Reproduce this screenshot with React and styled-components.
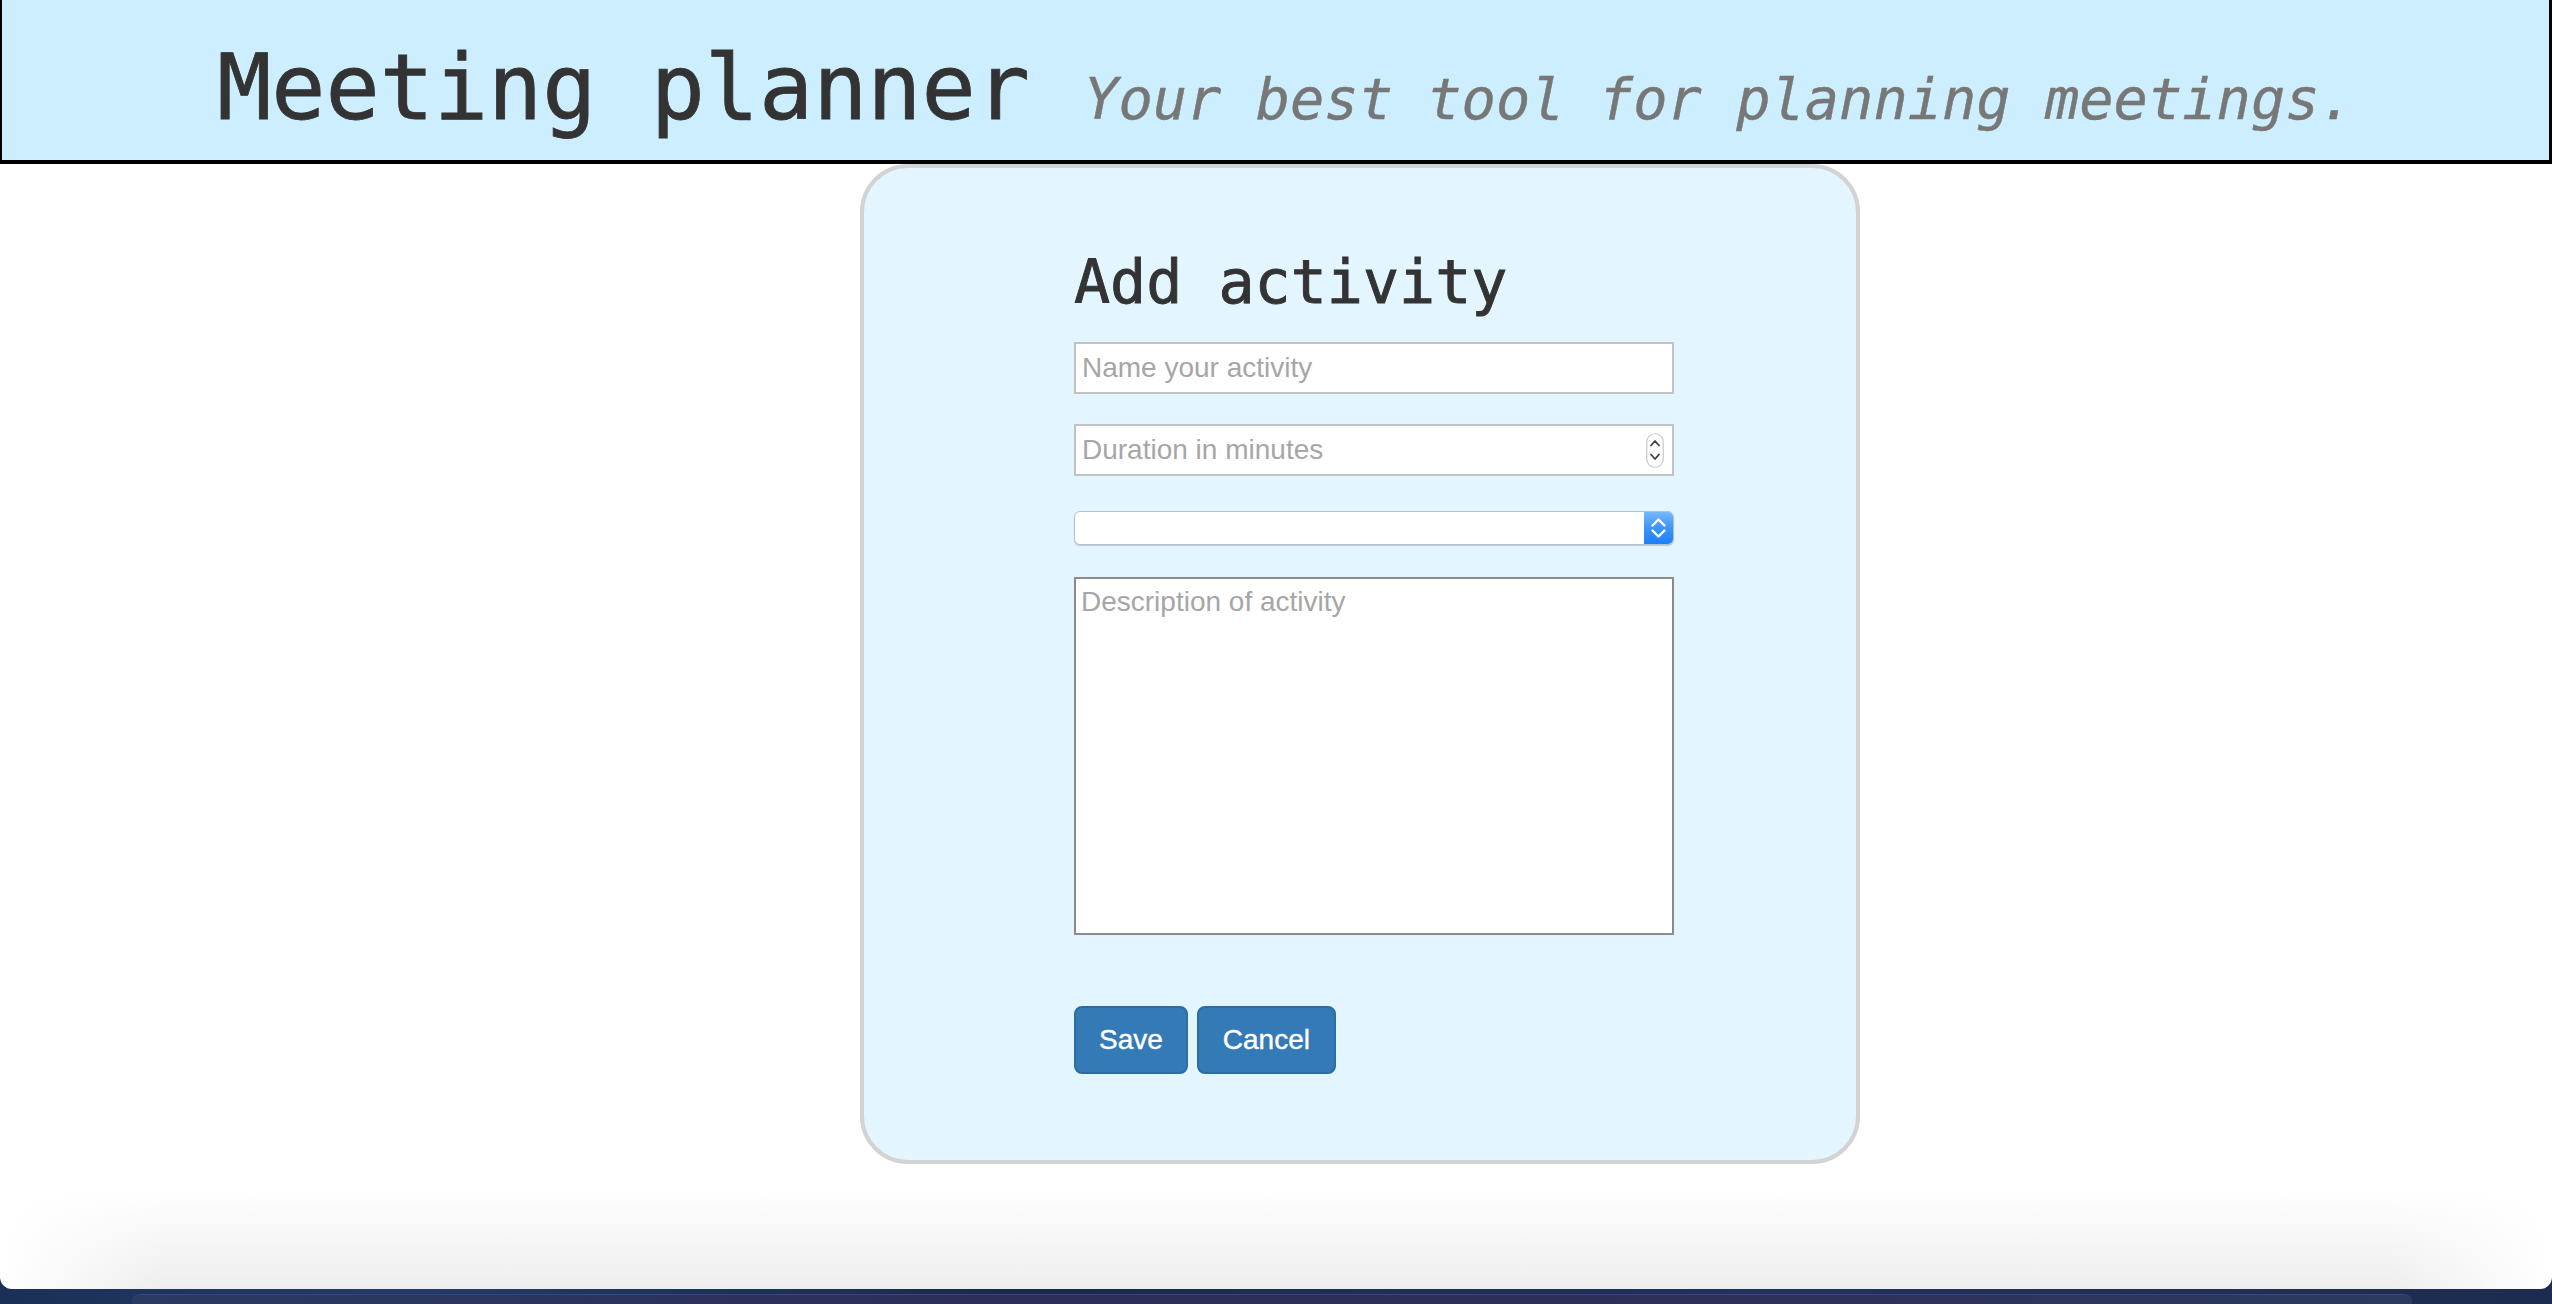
import React from "react";
import styled, { createGlobalStyle } from "styled-components";

const Global = createGlobalStyle`
  html, body { margin: 0; padding: 0; background: #1c2a4c; }
  #root { height: 1304px; }
  * { box-sizing: border-box; }
`;

const Page = styled.div`
  height: 1304px;
  display: flex;
  flex-direction: column;
  overflow: hidden;
  background: linear-gradient(90deg, #1b3058 0%, #243a66 15%, #1a2a4e 40%, #22335c 70%, #1c2c50 100%);
`;

const Window = styled.div`
  flex: 1;
  display: flex;
  flex-direction: column;
  background: #ffffff;
  border-radius: 0 0 12px 12px;
  overflow: hidden;
`;

const Header = styled.header`
  height: 164px;
  padding: 35px 0 0 20px;
  background: #cdeefe;
  border-left: 2px solid #000;
  border-right: 3px solid #000;
  border-bottom: 4px solid #000;
  text-align: center;
`;

const Title = styled.h1`
  margin: 0;
  font-family: "DejaVu Sans Mono", monospace;
  font-weight: normal;
  font-size: 90px;
  line-height: 105px;
  color: #333333;
  white-space: nowrap;
  -webkit-text-stroke: 0.8px #333333;
`;

const Tagline = styled.small`
  font-size: 57px;
  line-height: 1;
  font-style: italic;
  color: #777777;
  -webkit-text-stroke: 0.4px #777777;
`;

const Main = styled.main`
  display: flex;
  padding-left: 860px;
`;

const Card = styled.section`
  width: 1000px;
  height: 1000px;
  background: #e3f5fe;
  border: 4px solid #d3d3d3;
  border-radius: 48px;
  padding: 80px 0 0 210px;
`;

const Heading = styled.h2`
  margin: 0;
  font-family: "DejaVu Sans Mono", monospace;
  font-weight: normal;
  font-size: 60px;
  line-height: 68px;
  color: #333333;
  -webkit-text-stroke: 0.9px #333333;
`;

const Form = styled.form`
  width: 600px;
  display: flex;
  flex-direction: column;
  align-items: stretch;
`;

const fieldFont = `
  font-family: "Liberation Sans", Arial, sans-serif;
  font-size: 28px;
  color: #333;
  &::placeholder { color: #a6a6a6; opacity: 1; }
`;

const TextInput = styled.input`
  ${fieldFont}
  height: 52px;
  margin-top: ${(p) => p.$gap}px;
  padding: 0 6px;
  border: 2px solid #c2c2c2;
  background: #fff;
  outline: none;
`;

const NumberBox = styled.div`
  display: flex;
  align-items: center;
  height: 52px;
  margin-top: 30px;
  padding: 0 8px 0 6px;
  border: 2px solid #c2c2c2;
  background: #fff;
`;

const BareInput = styled.input`
  ${fieldFont}
  flex: 1;
  min-width: 0;
  border: none;
  padding: 0;
  outline: none;
  background: transparent;
`;

const Spinner = styled.svg`
  width: 18px;
  height: 35px;
  flex: none;
`;

const SelectBox = styled.div`
  display: flex;
  height: 34px;
  margin-top: 35px;
  border: 1px solid #b6c0c9;
  border-radius: 6px;
  background: #fff;
  box-shadow: 0 1px 1px rgba(0, 0, 0, 0.18);
  overflow: hidden;
`;

const NativeSelect = styled.select`
  flex: 1;
  appearance: none;
  border: none;
  background: transparent;
  outline: none;
  font-family: "Liberation Sans", Arial, sans-serif;
  font-size: 24px;
`;

const SelectArrow = styled.div`
  width: 29px;
  flex: none;
  display: flex;
  align-items: center;
  justify-content: center;
  background: linear-gradient(to bottom, #74b8fb 0%, #3c95fb 50%, #1a80fa 100%);
`;

const TextArea = styled.textarea`
  ${fieldFont}
  height: 358px;
  margin-top: 32px;
  padding: 7px 5px;
  border: 2px solid #8a8a8a;
  background: #fff;
  resize: none;
  outline: none;
  line-height: normal;
`;

const ButtonRow = styled.div`
  display: flex;
  gap: 9px;
  margin-top: 71px;
`;

const Button = styled.button`
  height: 68px;
  padding: 0 ${(p) => p.$pad}px;
  font-family: "Liberation Sans", Arial, sans-serif;
  font-size: 28px;
  color: #ffffff;
  background: #337ab7;
  border: 2px solid #2e6da4;
  border-radius: 8px;
  cursor: pointer;
  -webkit-text-stroke: 0.4px #ffffff;
`;

const Shade = styled.div`
  margin-top: auto;
  height: 100px;
  background: linear-gradient(to bottom, rgba(236, 236, 236, 0) 0%, #eeeeee 100%);
  -webkit-mask-image: linear-gradient(to right, transparent 0, #000 160px, #000 calc(100% - 160px), transparent 100%);
  mask-image: linear-gradient(to right, transparent 0, #000 160px, #000 calc(100% - 160px), transparent 100%);
`;

const Desktop = styled.div`
  height: 15px;
  flex: none;
  padding: 5px 140px 0 132px;
  display: flex;
`;

const Dock = styled.div`
  flex: 1;
  border-radius: 8px 8px 0 0;
  background: linear-gradient(90deg, #2b3a62 0%, #2c2d58 40%, #2e3058 70%, #2c3a60 100%);
  border-top: 1px solid #3c4677;
`;

export default function App() {
  return (
    <>
      <Global />
      <Page>
        <Window>
          <Header>
            <Title>
              Meeting planner <Tagline>Your best tool for planning meetings.</Tagline>
            </Title>
          </Header>
          <Main>
            <Card>
              <Heading>Add activity</Heading>
              <Form onSubmit={(e) => e.preventDefault()}>
                <TextInput $gap={26} type="text" placeholder="Name your activity" />
                <NumberBox>
                  <BareInput type="text" inputMode="numeric" placeholder="Duration in minutes" />
                  <Spinner viewBox="0 0 18 35">
                    <rect x="0.75" y="0.75" width="16.5" height="33.5" rx="8.25" fill="#fff" stroke="#c9c9c9" strokeWidth="1.2" />
                    <path d="M5 12.5 L9 8 L13 12.5" fill="none" stroke="#3f3f3f" strokeWidth="1.8" strokeLinecap="round" strokeLinejoin="round" />
                    <path d="M5 21.5 L9 26 L13 21.5" fill="none" stroke="#3f3f3f" strokeWidth="1.8" strokeLinecap="round" strokeLinejoin="round" />
                  </Spinner>
                </NumberBox>
                <SelectBox>
                  <NativeSelect defaultValue="">
                    <option value=""></option>
                  </NativeSelect>
                  <SelectArrow>
                    <svg width="29" height="32" viewBox="0 0 29 32">
                      <path d="M8.5 13.5 L14.5 7.5 L20.5 13.5" fill="none" stroke="#fff" strokeWidth="2.4" strokeLinecap="round" strokeLinejoin="round" />
                      <path d="M8.5 18.5 L14.5 24.5 L20.5 18.5" fill="none" stroke="#fff" strokeWidth="2.4" strokeLinecap="round" strokeLinejoin="round" />
                    </svg>
                  </SelectArrow>
                </SelectBox>
                <TextArea placeholder="Description of activity" />
                <ButtonRow>
                  <Button type="submit" $pad={23}>Save</Button>
                  <Button type="button" $pad={24}>Cancel</Button>
                </ButtonRow>
              </Form>
            </Card>
          </Main>
          <Shade />
        </Window>
        <Desktop>
          <Dock />
        </Desktop>
      </Page>
    </>
  );
}
